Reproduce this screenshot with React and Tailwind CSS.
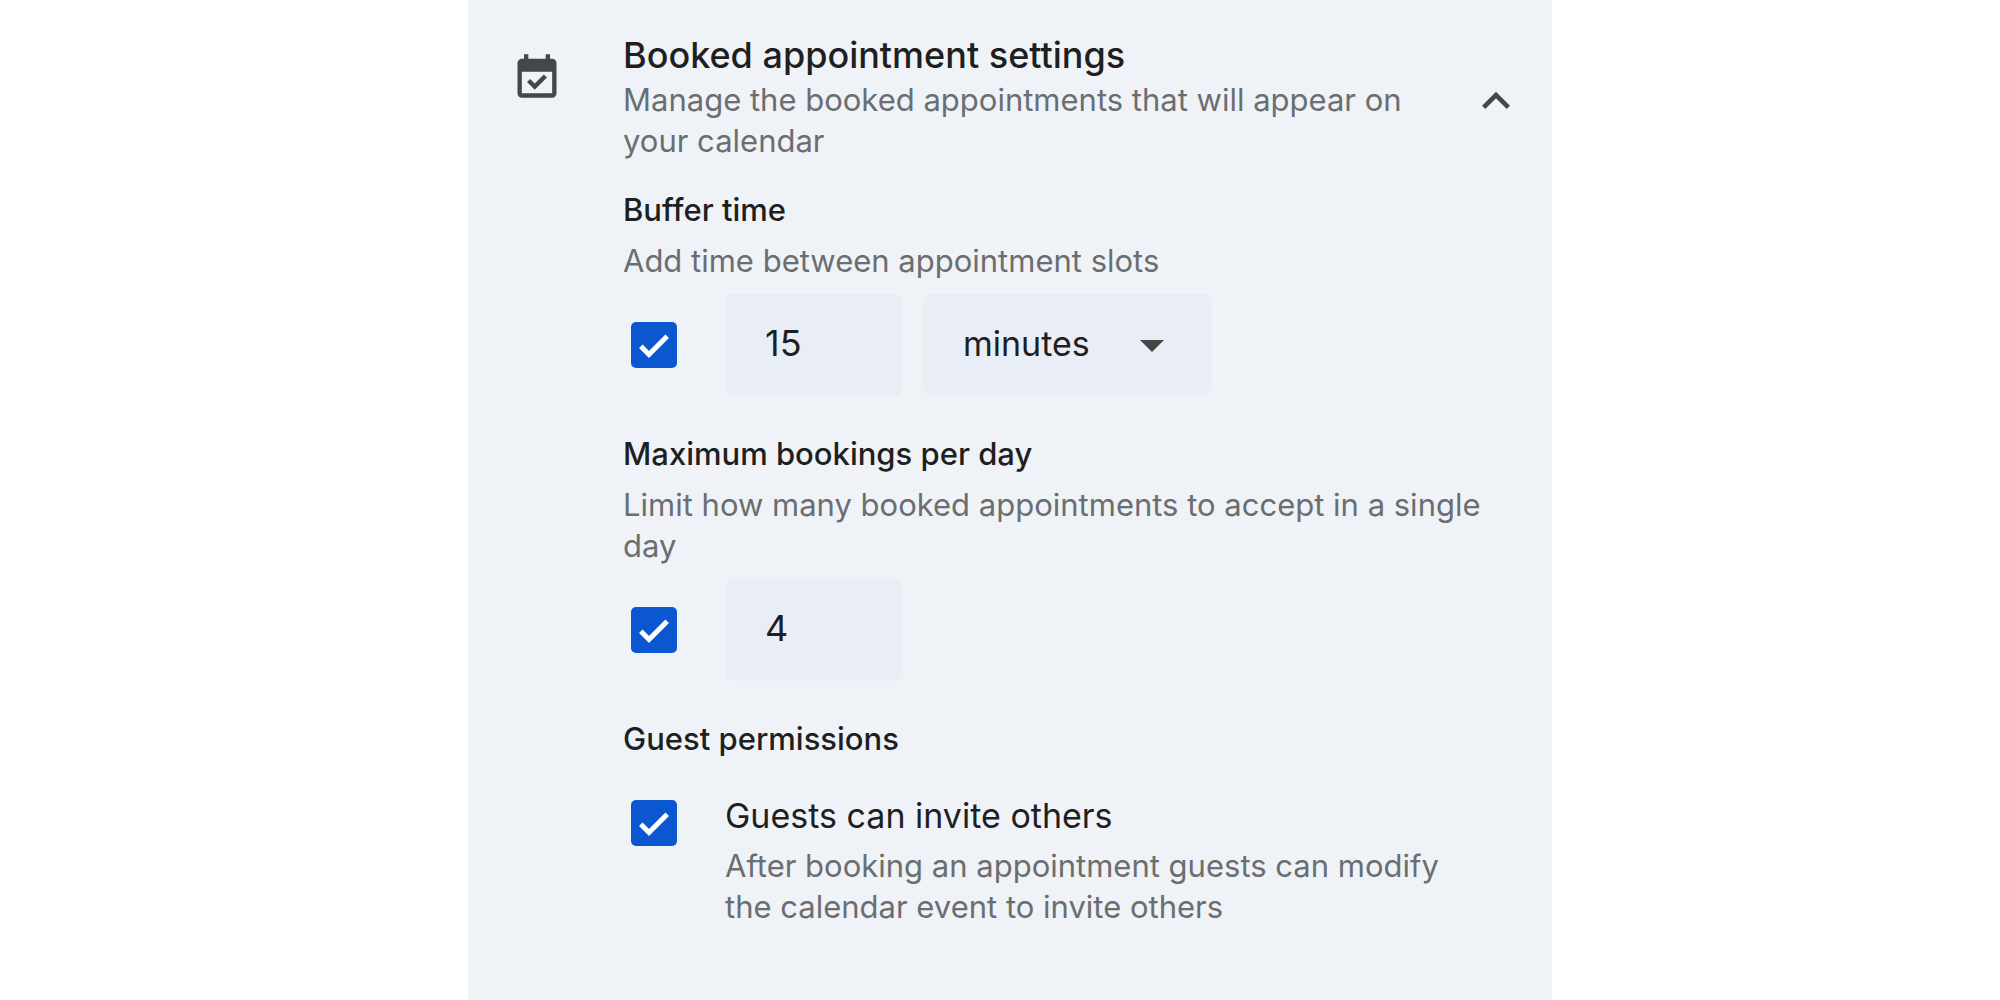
import { useState } from "react";

function CalendarCheckIcon() {
  return (
    <svg viewBox="0 -960 960 960" className="mt-[19px] size-[52px] shrink-0 fill-[#444746]" aria-hidden="true">
      <path d="M438-226 296-368l58-58 84 84 168-168 58 58-226 226ZM200-80q-33 0-56.5-23.5T120-160v-560q0-33 23.5-56.5T200-800h40v-80h80v80h320v-80h80v80h40q33 0 56.5 23.5T840-720v560q0 33-23.5 56.5T760-80H200Zm0-80h560v-400H200v400Z" />
    </svg>
  );
}

function ChevronUpIcon() {
  return (
    <svg viewBox="0 -960 960 960" className="size-14 fill-[#444746]" aria-hidden="true">
      <path d="M480-528 296-344l-56-56 240-240 240 240-56 56-184-184Z" />
    </svg>
  );
}

function Checkbox({ id, label }) {
  return (
    <span className="relative ml-2 flex size-[46px] shrink-0">
      <input
        id={id}
        type="checkbox"
        defaultChecked
        aria-label={label}
        className="peer size-full cursor-pointer appearance-none rounded-[5px] border-4 border-[#444746] checked:border-0 checked:bg-[#0b57d0]"
      />
      <svg
        viewBox="0 0 46 46"
        className="pointer-events-none absolute inset-0 hidden fill-none stroke-white stroke-5 peer-checked:block"
        aria-hidden="true"
      >
        <path d="M9.8 24.2 18 32.4 36.2 14.2" />
      </svg>
    </span>
  );
}

function NumberField({ label, value }) {
  return (
    <input
      type="text"
      inputMode="numeric"
      aria-label={label}
      defaultValue={value}
      className="h-[102px] w-[177px] rounded-lg bg-[#e8edf6] px-10 pb-1 text-[36px] text-[#1f1f1f] outline-none"
    />
  );
}

function UnitSelect() {
  return (
    <span className="relative flex">
      <select
        aria-label="Buffer time unit"
        defaultValue="minutes"
        className="h-[102px] w-[289px] appearance-none rounded-lg bg-[#e8edf6] px-10 pb-1 text-[34px] text-[#1f1f1f] outline-none"
      >
        <option value="minutes">minutes</option>
        <option value="hours">hours</option>
      </select>
      <svg
        viewBox="0 0 24 12"
        className="pointer-events-none absolute top-[46px] right-12 h-3 w-6 fill-[#444746]"
        aria-hidden="true"
      >
        <path d="M0 0h24L12 12z" />
      </svg>
    </span>
  );
}

function Setting({ title, description, children }) {
  return (
    <section>
      <h3 className="text-[31px] leading-[41px] font-medium text-[#1f1f1f]">{title}</h3>
      {description && <p className="mt-2.5 text-[31px] leading-[41px] text-[#6b6e70]">{description}</p>}
      {children}
    </section>
  );
}

export default function App() {
  const [open, setOpen] = useState(true);

  return (
    <main className="flex min-h-screen justify-center bg-white pl-5 font-['Inter',sans-serif]">
      <div className="w-full max-w-[1084px] bg-[#eff3f8] pt-[31px] pr-7 pb-10 pl-[43px]">
        <header className="flex">
          <CalendarCheckIcon />
          <div className="ml-[60px] flex-1">
            <h2 className="text-[36px] leading-[48px] font-medium text-[#1f1f1f]">Booked appointment settings</h2>
            <p className="text-[31px] leading-[41px] text-[#6b6e70]">
              Manage the booked appointments that will appear on your calendar
            </p>
          </div>
          <button
            type="button"
            aria-label="Toggle booked appointment settings"
            aria-expanded={open}
            onClick={() => setOpen(!open)}
            className="mt-[42px] ml-3 size-14 shrink-0 cursor-pointer rounded-full"
          >
            <ChevronUpIcon />
          </button>
        </header>

        {open && (
          <div className="mt-7 flex flex-col gap-[37px] pr-10 pl-28">
            <Setting title="Buffer time" description="Add time between appointment slots">
              <div className="mt-[13px] flex items-center">
                <Checkbox id="buffer" label="Use buffer time" />
                <div className="ml-12 flex gap-[21px]">
                  <NumberField label="Buffer time amount" value="15" />
                  <UnitSelect />
                </div>
              </div>
            </Setting>

            <Setting
              title="Maximum bookings per day"
              description="Limit how many booked appointments to accept in a single day"
            >
              <div className="mt-[13px] flex items-center">
                <Checkbox id="maximum" label="Limit bookings per day" />
                <div className="ml-12">
                  <NumberField label="Maximum bookings" value="4" />
                </div>
              </div>
            </Setting>

            <Setting title="Guest permissions">
              <div className="mt-8 flex">
                <div className="mt-[9px]">
                  <Checkbox id="guests" />
                </div>
                <div className="ml-12">
                  <label htmlFor="guests" className="block text-[34px] leading-[50px] text-[#1f1f1f]">
                    Guests can invite others
                  </label>
                  <p className="mt-1 text-[31px] leading-[41px] text-[#6b6e70]">
                    After booking an appointment guests can modify the calendar event to invite others
                  </p>
                </div>
              </div>
            </Setting>
          </div>
        )}
      </div>
    </main>
  );
}
